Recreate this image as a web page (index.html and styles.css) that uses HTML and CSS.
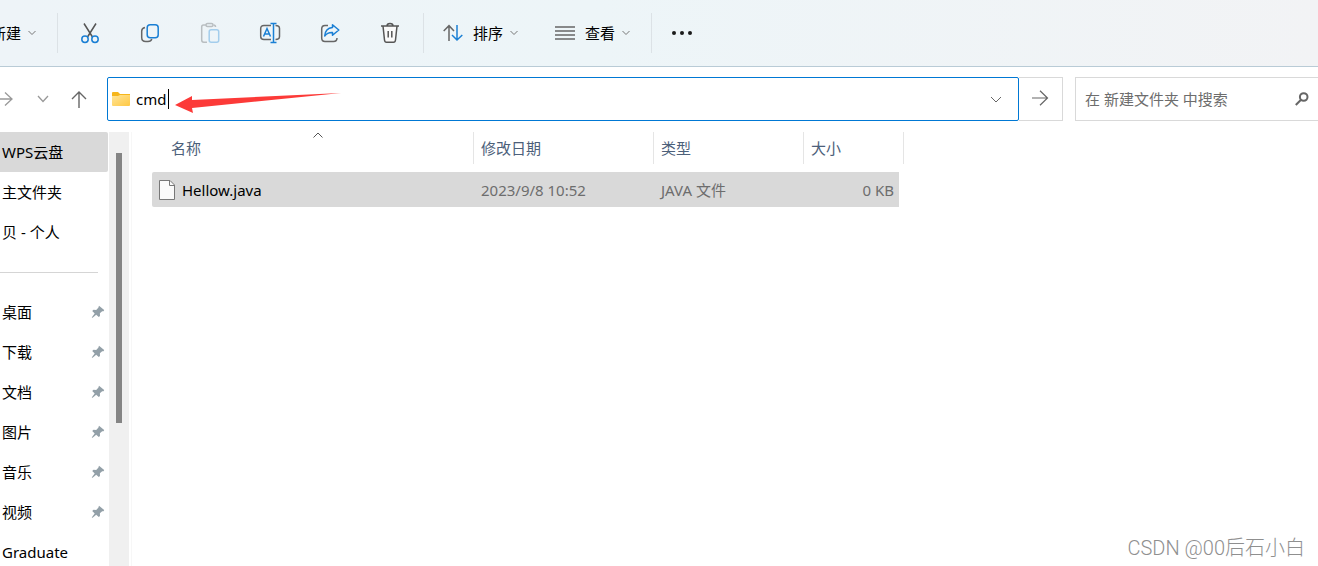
FILE: index.html
```html
<!DOCTYPE html>
<html lang="zh-CN">
<head>
<meta charset="utf-8">
<title>新建文件夹</title>
<link rel="stylesheet" href="styles.css">
</head>
<body>
<svg class="defs" aria-hidden="true">
  <symbol id="chevron" viewBox="0 0 10 6"><path d="M1.500 1L5 4.500 8.500 1" fill="none" stroke="currentColor"/></symbol>
  <symbol id="pin" viewBox="0 0 14 14"><path d="M8 .8L13.2 5l-.6 1.2-1.4.1-2.3 2 .1 2.6-1.2 1.2-2.6-2.4-3.6 3.1-.9-.4 3-3.9L1.200 5.900l1.300-1.200 2.700.200L7.300 2.700z" fill="currentColor"/></symbol>
</svg>
<div class="window">
  <header class="toolbar">
    <button class="tool tool-new"><span>新建</span><svg class="chev"><use href="#chevron"/></svg></button>
    <span class="divider"></span>
    <div class="icon-group">
      <button class="icon-btn" aria-label="剪切"><svg width="20" height="22" viewBox="0 0 20 22" fill="none" stroke-width="1.5"><path d="M4 1.500l8.500 13.500M16 1.500L7.500 15" stroke="#555"/><circle cx="5" cy="17.300" r="3.200" stroke="#1a7fd4"/><circle cx="15" cy="17.300" r="3.200" stroke="#1a7fd4"/></svg></button>
      <button class="icon-btn" aria-label="复制"><svg width="20" height="20" viewBox="0 0 20 20" fill="none" stroke-width="1.500"><path d="M5 4.500C2.700 5 1.700 6 1.700 8v6.500c0 2.700 1.300 4 4 4H8c2 0 3.300-.8 3.800-2.500" stroke="#666"/><rect x="7.200" y="1.700" width="11" height="13" rx="3" stroke="#1a7fd4"/></svg></button>
      <button class="icon-btn" aria-label="粘贴" disabled><svg width="20" height="22" viewBox="0 0 20 22" fill="none" stroke-width="1.500"><path d="M6 3H3.500C2.200 3 1.700 3.600 1.700 5v13c0 1.500.600 2.200 2 2.200H7M13.500 3c1.300 0 2 .600 2 2" stroke="#b9bec1"/><rect x="6" y="1.500" width="7" height="3" rx="1.500" stroke="#b9bec1"/><rect x="9.200" y="7.700" width="9.500" height="12.500" rx="2" stroke="#a3cdec"/></svg></button>
      <button class="icon-btn" aria-label="重命名"><svg width="22" height="22" viewBox="0 0 22 22" fill="none" stroke-width="1.500"><path d="M12 3.500H5c-2.200 0-3.300 1-3.300 3v8c0 2 1.100 3 3.300 3h7M16.500 3.500c2.700 0 4 1 4 3v8c0 2-1.300 3-4 3" stroke="#666"/><path d="M4.500 14.500l3.500-8 3.500 8M5.800 12h4.500M11.500 1.500h6M11.500 20.500h6M14.500 1.500v19" stroke="#1a7fd4"/></svg></button>
      <button class="icon-btn" aria-label="共享"><svg width="20" height="20" viewBox="0 0 20 20" fill="none" stroke-width="1.500"><path d="M8 2.500H5C2.700 2.500 1.700 3.500 1.700 6v9c0 2.500 1 3.500 3.300 3.500h8.500c2.500 0 3.500-1 3.500-3.500" stroke="#666"/><path d="M12.500 1.700L18.800 7l-6.300 5.300V9.500C8.500 9.300 6.500 10.500 4.700 13 5 8.500 7.500 5 12.500 4.500z" stroke="#1a7fd4" stroke-linejoin="round"/></svg></button>
      <button class="icon-btn" aria-label="删除"><svg width="20" height="22" viewBox="0 0 20 22" fill="none" stroke="#555" stroke-width="1.500"><path d="M3 4l1.500 14c.2 1.700.700 2.200 2 2.200h7c1.300 0 1.800-.5 2-2.200L17 4" fill="#fafafa"/><path d="M1 4h18M7 4c0-3.200 6-3.200 6 0M8.200 9v6.500M11.800 9v6.500"/></svg></button>
    </div>
    <span class="divider"></span>
    <button class="tool tool-menu"><svg width="20" height="18" viewBox="0 0 20 18" fill="none" stroke-width="1.500"><path d="M6 17V2M.700 7L6 1.700 11 7" stroke="#666"/><path d="M14 1v15M9 11l5 5 5.300-5" stroke="#1a7fd4"/></svg><span>排序</span><svg class="chev"><use href="#chevron"/></svg></button>
    <button class="tool tool-menu"><svg width="20" height="14" viewBox="0 0 20 14"><path d="M0 1h20M0 5h20M0 9h20M0 13h20" stroke="#666" stroke-width="1.300"/></svg><span>查看</span><svg class="chev"><use href="#chevron"/></svg></button>
    <span class="divider"></span>
    <button class="tool tool-more" aria-label="更多"><svg width="20" height="4" viewBox="0 0 20 4" fill="#1a1a1a"><circle cx="2" cy="2" r="2"/><circle cx="10" cy="2" r="2"/><circle cx="18" cy="2" r="2"/></svg></button>
  </header>

  <nav class="navbar">
    <div class="history">
      <button class="nav-btn forward" aria-label="前进"><svg width="18" height="16" viewBox="0 0 18 16" fill="none" stroke="#999" stroke-width="1.300"><path d="M0 8h16M9 1.500L16 8l-7 6.500"/></svg></button>
      <button class="nav-btn recent" aria-label="最近的位置"><svg width="12" height="8" viewBox="0 0 12 8" fill="none" stroke="#999" stroke-width="1.300"><path d="M1 1l5 5.500L11 1"/></svg></button>
      <button class="nav-btn up" aria-label="向上"><svg width="16" height="17" viewBox="0 0 16 17" fill="none" stroke="#666" stroke-width="1.400"><path d="M8 17V1M1 8l7-7 7 7"/></svg></button>
    </div>
    <div class="address">
      <svg width="18" height="14" viewBox="0 0 18 14"><defs><linearGradient id="fold" x2="1" y2="1"><stop stop-color="#ffe599"/><stop offset="1" stop-color="#ffc843"/></linearGradient></defs><path d="M0 1q0-1 1-1h5l2 2h10v5H0z" fill="#f6b61b"/><path d="M0 4h6l2-1h10v10q0 1-1 1H1q-1 0-1-1z" fill="url(#fold)"/></svg>
      <input class="path" type="text" value="cmd" aria-label="地址"><span class="caret"></span>
      <button class="drop" aria-label="历史记录"><svg width="12" height="7" viewBox="0 0 12 7" fill="none" stroke="#666"><path d="M1 1l5 5 5-5"/></svg></button>
      <svg class="pointer" width="168" height="22" viewBox="0 0 168 22"><path d="M0 12L17 3v4L166 0 17 15l1 5z" fill="#fc3a38"/></svg>
    </div>
    <button class="go" aria-label="转到"><svg width="18" height="16" viewBox="0 0 18 16" fill="none" stroke="#666" stroke-width="1.200"><path d="M0 8h15.500M8 .700L15.500 8 8 15.300"/></svg></button>
    <div class="search">
      <input type="search" placeholder="在 新建文件夹 中搜索" aria-label="搜索">
      <svg width="14" height="14" viewBox="0 0 14 14" fill="none" stroke="#666" stroke-width="2"><circle cx="8.700" cy="5" r="3.800"/><path d="M6 7.800L.800 13"/></svg>
    </div>
  </nav>

  <div class="content">
    <aside class="sidebar">
      <ul class="tree">
        <li><a class="item selected" href="#">WPS云盘</a></li>
        <li><a class="item" href="#">主文件夹</a></li>
        <li><a class="item" href="#">贝 - 个人</a></li>
        <li class="split"></li>
        <li><a class="item" href="#">桌面<svg class="pin"><use href="#pin"/></svg></a></li>
        <li><a class="item" href="#">下载<svg class="pin"><use href="#pin"/></svg></a></li>
        <li><a class="item" href="#">文档<svg class="pin"><use href="#pin"/></svg></a></li>
        <li><a class="item" href="#">图片<svg class="pin"><use href="#pin"/></svg></a></li>
        <li><a class="item" href="#">音乐<svg class="pin"><use href="#pin"/></svg></a></li>
        <li><a class="item" href="#">视频<svg class="pin"><use href="#pin"/></svg></a></li>
        <li><a class="item" href="#">Graduate</a></li>
      </ul>
      <div class="scrollbar"><div class="thumb"></div></div>
    </aside>
    <main class="files">
      <table>
        <colgroup><col class="c-name"><col class="c-date"><col class="c-type"><col class="c-size"></colgroup>
        <thead><tr><th>名称<svg class="sorted" width="10" height="6" viewBox="0 0 10 6"><path d="M.500 5.500L5 1l4.500 4.500" fill="none" stroke="#555"/></svg></th><th>修改日期</th><th>类型</th><th>大小</th></tr></thead>
        <tbody><tr>
          <td><span class="file"><svg width="16" height="20" viewBox="0 0 16 20"><path d="M.500.500H11L15.500 5v14.500H.500z" fill="#fafafa" stroke="#777"/><path d="M10.500.500v5h5" fill="none" stroke="#777"/></svg>Hellow.java</span></td>
          <td>2023/9/8 10:52</td><td>JAVA 文件</td><td>0 KB</td>
        </tr></tbody>
      </table>
    </main>
  </div>
  <div class="watermark">CSDN @00后石小白</div>
</div>
</body>
</html>
```
FILE: styles.css
```css
* { box-sizing: border-box; }

body {
  margin: 0;
  background: #fff;
  color: #000;
  font: 15px/20px "Noto Sans", "Noto Sans CJK SC", sans-serif;
}

button, input {
  margin: 0;
  padding: 0;
  border: 0;
  background: none;
  color: inherit;
  font: inherit;
}

input { outline: 0; }
svg { flex: none; }
.defs { position: absolute; width: 0; height: 0; }

.window {
  position: relative;
  display: flex;
  flex-direction: column;
  height: 100vh;
  overflow: hidden;
}

/* Command bar */
.toolbar {
  display: flex;
  flex: none;
  align-items: center;
  height: 67px;
  border-bottom: 1px solid #b9cbd6;
  background: linear-gradient(90deg, #eef4f8, #edf5f8 45%, #f2f3f5);
}
.divider { width: 1px; height: 40px; background: #dce2e6; }
.tool { display: flex; align-items: center; height: 40px; white-space: nowrap; }
.tool-new { justify-content: flex-end; gap: 6px; width: 57px; padding-right: 20px; }
.chev { width: 10px; height: 6px; color: #777; }
.icon-group { display: flex; padding: 0 3px 0 2px; }
.icon-btn { display: grid; place-items: center; width: 60px; height: 40px; }
.tool-menu { gap: 10px; padding-left: 19px; width: 112px; }
.tool-menu .chev { margin-left: -4px; }
.tool-menu + .divider { margin-left: 3px; }
.tool-more { padding: 0 20px; }

/* Navigation row */
.navbar { display: flex; flex: none; align-items: center; height: 65px; padding-bottom: 1px; }
.history { display: flex; align-items: center; width: 107px; }
.nav-btn { display: flex; align-items: center; height: 40px; }
.forward { width: 37px; margin-left: -4px; }
.recent { width: 34px; padding-left: 4px; }
.up { padding-left: 4px; }
.address {
  position: relative;
  display: flex;
  flex: 1;
  align-items: center;
  height: 44px;
  padding-left: 4px;
  border: 1px solid #0078d4;
  border-radius: 2px;
}
.path { width: 32px; margin-left: 6px; }
.caret { width: 1px; height: 20px; background: #000; }
.drop { display: grid; place-items: center; width: 44px; height: 42px; margin-left: auto; }
.pointer { position: absolute; left: 67px; top: 15px; }
.go {
  display: grid;
  place-items: center;
  width: 44px;
  height: 44px;
  padding-bottom: 2px;
  border: 1px solid #d9d9d9;
  border-left: 0;
}
.search {
  display: flex;
  align-items: center;
  width: 243px;
  height: 44px;
  margin-left: 12px;
  padding: 0 9px;
  border: 1px solid #d9d9d9;
  border-right: 0;
}
.search input { flex: 1; min-width: 0; }
.search input::placeholder { color: #6d6d6d; opacity: 1; }

/* Body */
.content { display: flex; flex: 1; min-height: 0; }
.sidebar { display: flex; width: 132px; border-right: 1px solid #f7f7f7; }
.tree { width: 108px; margin: 0; padding: 0; list-style: none; }
.item {
  display: flex;
  align-items: center;
  justify-content: space-between;
  height: 40px;
  padding: 0 3px 0 2px;
  color: inherit;
  text-decoration: none;
}
.selected { border-radius: 0 2px 2px 0; background: #d9d9d9; }
.split { height: 40px; padding-top: 20px; }
.split::before { content: ""; display: block; width: 98px; height: 1px; background: #d5d5d5; }
.pin { width: 14px; height: 14px; color: #93a0a8; }
.scrollbar { width: 20px; margin-left: 1px; padding: 21px 7px 0; background: #f0f0f0; }
.thumb { width: 6px; height: 270px; background: #858585; }

.files { flex: 1; padding-left: 20px; }
table { width: 752px; border-spacing: 0; table-layout: fixed; }
.c-name { width: 322px; }
.c-date { width: 180px; }
.c-type { width: 150px; }
.c-size { width: 100px; }
th {
  position: relative;
  height: 32px;
  padding: 0 7px;
  border-right: 1px solid #e5e5e5;
  color: #4c607a;
  font-weight: 400;
  text-align: left;
}
th:first-child { padding-left: 19px; }
.sorted { position: absolute; left: 161px; top: 0; }
tbody::before { content: ""; display: block; height: 8px; }
td { height: 35px; padding: 0 7px; background: #d9d9d9; color: #6d6d6d; }
td:first-child { border-radius: 2px 0 0 2px; color: #000; }
td:last-child {
  padding-right: 5px;
  border-right: 5px solid transparent;
  border-radius: 0 2px 2px 0;
  background-clip: padding-box;
  text-align: right;
}
.file { display: flex; align-items: center; gap: 7px; }

.watermark {
  position: absolute;
  right: 13px;
  bottom: 5px;
  color: #8f8f8f;
  font: 300 20px/26px Roboto, "Noto Sans CJK SC", sans-serif;
}
```
